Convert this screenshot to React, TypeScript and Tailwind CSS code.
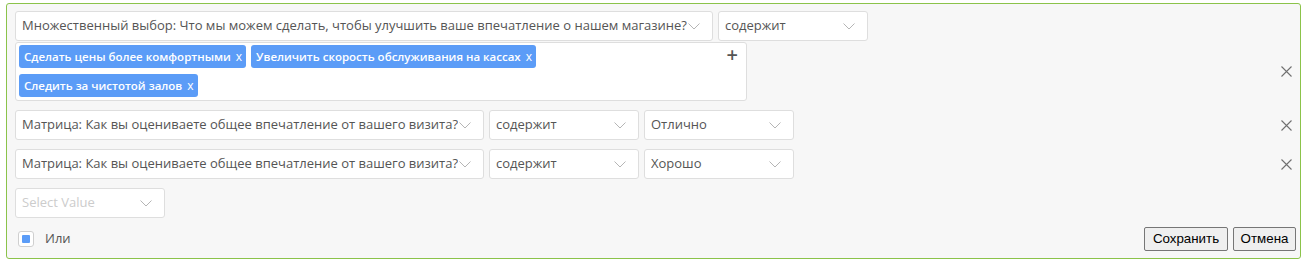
import React from "react";

function Chevron() {
  return (
    <svg width="12" height="7" viewBox="0 0 12 7" className="shrink-0">
      <path d="M0.5 0.5 L6 6 L11.5 0.5" fill="none" stroke="#b5b5b5" strokeWidth="1" />
    </svg>
  );
}

function Select({ value, width, placeholder }: { value: string; width: string; placeholder?: boolean }) {
  return (
    <div
      className={`${width} h-[30px] flex items-center justify-between bg-white border border-[#dedede] rounded-[3px] pl-[6px] pr-[12px] shrink-0`}
    >
      <span className={`truncate ${placeholder ? "text-[#cccccc]" : "text-[#555555]"}`}>{value}</span>
      <Chevron />
    </div>
  );
}

function Tag({ label }: { label: string }) {
  return (
    <span className="inline-flex items-center h-[23px] pl-[5px] pr-[4px] rounded-[3px] bg-[#5b9cf7] text-white text-[11.5px] font-semibold">
      {label}
      <span className="ml-[5px] font-normal text-[12px]">x</span>
    </span>
  );
}

function CloseX() {
  return (
    <svg width="11" height="11" viewBox="0 0 11 11" className="shrink-0">
      <path d="M0.5 0.5 L10.5 10.5 M10.5 0.5 L0.5 10.5" stroke="#707070" strokeWidth="1.1" />
    </svg>
  );
}

export default function App() {
  const question = "Матрица: Как вы оцениваете общее впечатление от вашего визита?";
  return (
    <div className="pt-[3px] px-[6px] font-['Open_Sans',sans-serif] text-[13px]">
      <div className="h-[256px] border border-[#8bc34a] rounded-[3px] bg-[#f7f7f7] pt-[7px] pl-[8px] pr-[4px] flex flex-col">
        {/* условие 1 */}
        <div className="flex items-end justify-between">
          <div className="flex flex-col gap-[1px]">
            <div className="flex gap-[5px]">
              <Select
                width="w-[698px]"
                value="Множественный выбор: Что мы можем сделать, чтобы улучшить ваше впечатление о нашем магазине?"
              />
              <Select width="w-[150px]" value="содержит" />
            </div>
            <div className="relative w-[732px] h-[59px] bg-white border border-[#dedede] rounded-[3px] pl-[3px] pr-[30px] pt-[2px] flex flex-wrap content-start gap-x-[5px] gap-y-[6px]">
              <Tag label="Сделать цены более комфортными" />
              <Tag label="Увеличить скорость обслуживания на кассах" />
              <Tag label="Следить за чистотой залов" />
              <span className="absolute right-[8px] top-[2px] text-[#555555] text-[20px] font-semibold leading-none">+</span>
            </div>
          </div>
          <div className="mr-[4px] mb-[24px]">
            <CloseX />
          </div>
        </div>

        {/* условие 2 */}
        <div className="flex items-center justify-between mt-[9px]">
          <div className="flex gap-[5px]">
            <Select width="w-[469px]" value={question} />
            <Select width="w-[150px]" value="содержит" />
            <Select width="w-[150px]" value="Отлично" />
          </div>
          <div className="mr-[4px]">
            <CloseX />
          </div>
        </div>

        {/* условие 3 */}
        <div className="flex items-center justify-between mt-[9px]">
          <div className="flex gap-[5px]">
            <Select width="w-[469px]" value={question} />
            <Select width="w-[150px]" value="содержит" />
            <Select width="w-[150px]" value="Хорошо" />
          </div>
          <div className="mr-[4px]">
            <CloseX />
          </div>
        </div>

        <div className="mt-[9px]">
          <Select width="w-[150px]" value="Select Value" placeholder />
        </div>

        <div className="flex items-center justify-between mt-[9px]">
          <div className="flex items-center pl-[3px]">
            <span className="w-[16px] h-[16px] bg-white border border-[#cfcfcf] rounded-[3px] flex items-center justify-center">
              <span className="w-[8px] h-[8px] bg-[#5b9cf7] rounded-[1px]" />
            </span>
            <span className="ml-[11px] text-[#555555]">Или</span>
          </div>
          <div className="flex gap-[5px] font-['Liberation_Sans',Arial,sans-serif] text-[13.33px] text-black">
            <button className="h-[24px] w-[84px] bg-[#efefef] border border-[#767676] rounded-[2px]">Сохранить</button>
            <button className="h-[24px] w-[63px] bg-[#efefef] border border-[#767676] rounded-[2px]">Отмена</button>
          </div>
        </div>
      </div>
    </div>
  );
}
